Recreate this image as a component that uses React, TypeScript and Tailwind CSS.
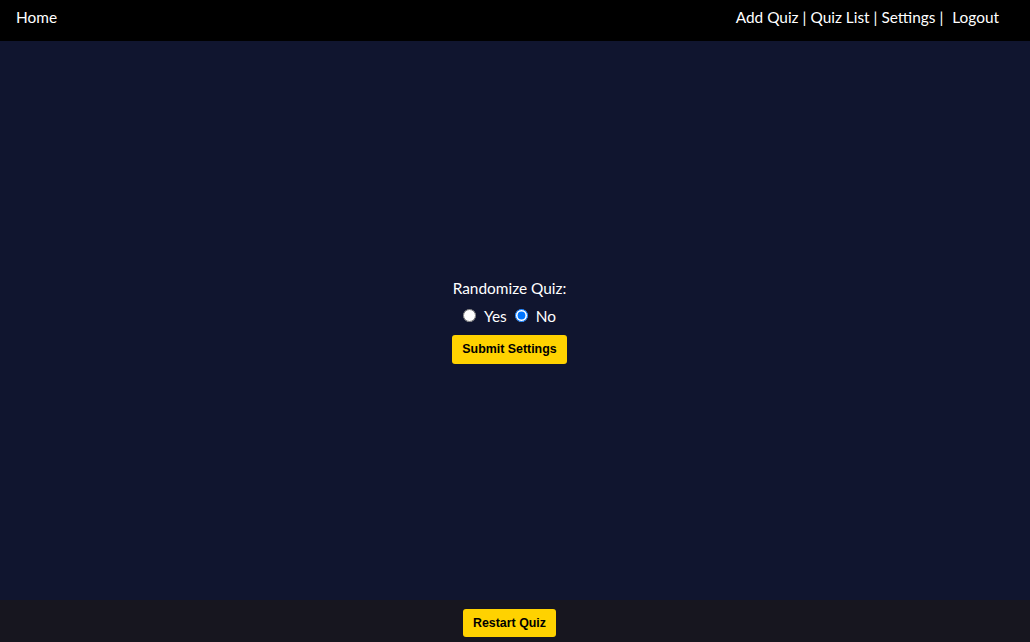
import React from "react";

export default function App() {
  return (
    <div className="flex h-[642px] w-[1030px] flex-col bg-[#10152f] text-white" style={{ fontFamily: 'Lato, "Noto Sans", sans-serif' }}>
      <header className="flex h-[41px] shrink-0 items-center justify-between bg-black pb-[5px] pl-4 pr-[31px] text-[15.4px]">
        <a className="leading-none">Home</a>
        <nav className="flex items-center leading-none">
          <a>Add Quiz</a>
          <span className="mx-[4px]">|</span>
          <a>Quiz List</a>
          <span className="mx-[4px]">|</span>
          <a>Settings</a>
          <span className="ml-[4px] mr-[9px]">|</span>
          <a>Logout</a>
        </nav>
      </header>
      <main className="flex flex-1 flex-col items-center justify-center pr-[11px]">
        <div className="flex flex-col items-center">
          <div className="text-[15.4px] leading-[20px]">Randomize Quiz:</div>
          <div className="mt-[8px] flex items-center text-[15.4px] leading-[20px]">
            <input type="radio" name="r" className="m-0 h-[13px] w-[13px]" />
            <span className="ml-[8px] mr-[8px]">Yes</span>
            <input type="radio" name="r" defaultChecked className="m-0 h-[13px] w-[13px]" />
            <span className="ml-[8px]">No</span>
          </div>
          <button className="mt-[9px] h-[29px] rounded-[3px] bg-[#ffd200] px-[10px] text-[12.4px] font-bold text-black" style={{ fontFamily: '"Liberation Sans", Arial, sans-serif' }}>
            Submit Settings
          </button>
        </div>
      </main>
      <footer className="flex h-[42px] shrink-0 justify-center bg-[#17161f] pr-[11px] pt-[9px]">
        <button className="h-[28px] rounded-[3px] bg-[#ffd200] px-[10px] text-[12.4px] font-bold text-black" style={{ fontFamily: '"Liberation Sans", Arial, sans-serif' }}>
          Restart Quiz
        </button>
      </footer>
    </div>
  );
}
